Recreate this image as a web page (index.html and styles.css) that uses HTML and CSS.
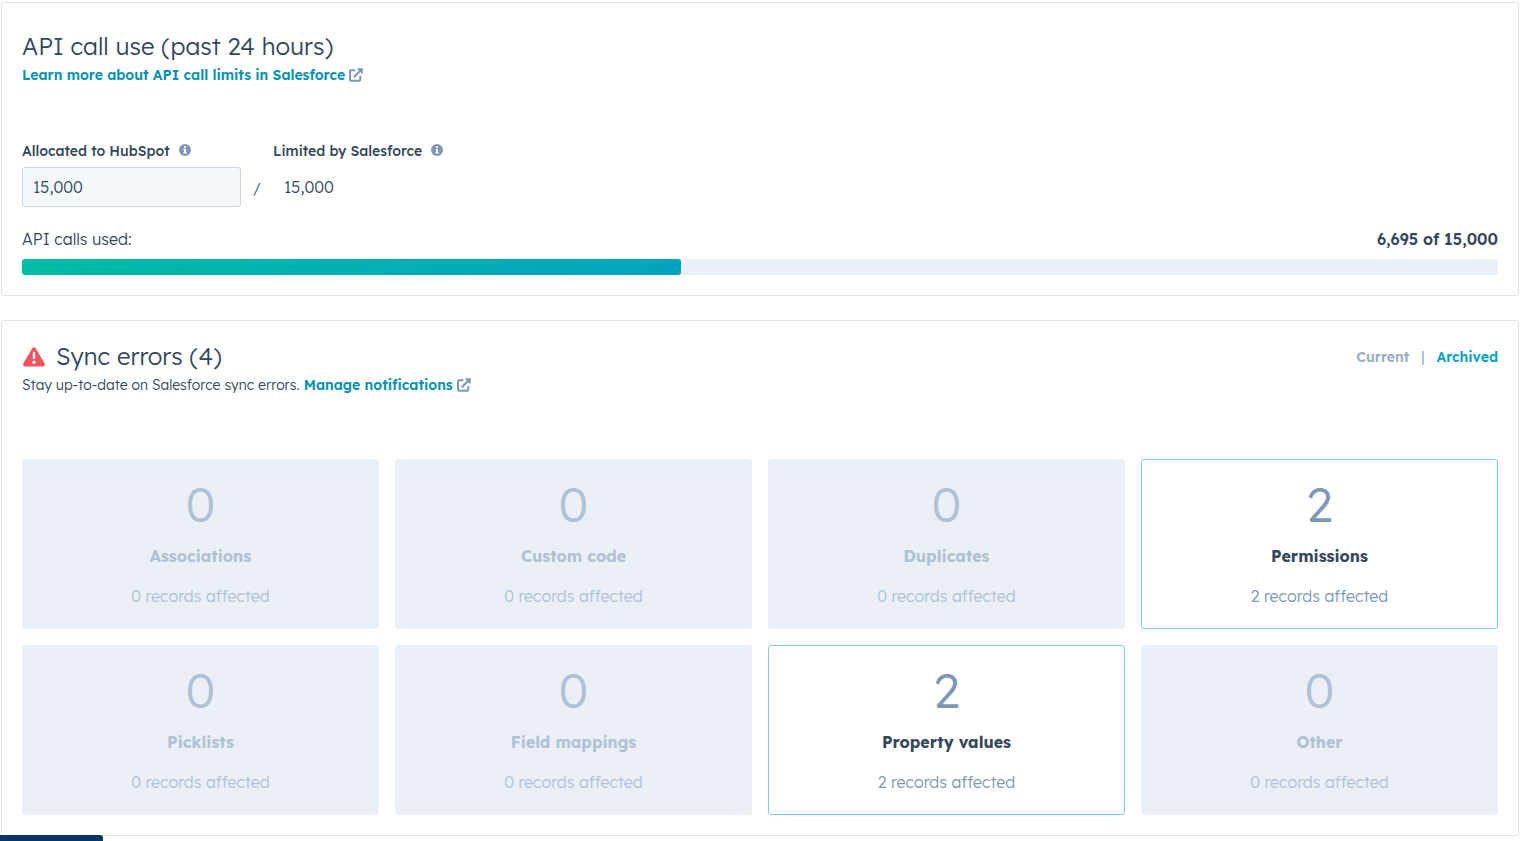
FILE: index.html
```html
<!DOCTYPE html>
<html lang="en">
<head>
<meta charset="utf-8">
<title>Salesforce sync</title>
<link rel="stylesheet" href="styles.css">
</head>
<body>
<svg class="sprite" aria-hidden="true">
  <symbol id="external" viewBox="0 0 14 14">
    <path d="M6.200 2.300H2.200Q1 2.300 1 3.500V11.500Q1 12.700 2.200 12.700H10.100Q11.300 12.700 11.300 11.500V8" fill="none" stroke="currentColor" stroke-width="2"/>
    <path d="M4.800 9.200L11.500 2.500" fill="none" stroke="currentColor" stroke-width="2"/>
    <path d="M8 .3H13.200Q13.800 .3 13.800 .9V6L11.700 4.500 9.600 2.400Z" fill="currentColor"/>
  </symbol>
  <symbol id="info" viewBox="0 0 12 14">
    <circle cx="6" cy="6" r="6" fill="currentColor"/>
    <path d="M5 2.200H7V3.900H5ZM4.300 4.900H7V8.300H7.800V9.500H4.300V8.300H5.100V6.100H4.300Z" fill="#fff"/>
  </symbol>
</svg>
<main class="page">
  <section class="card">
    <header class="card-header">
      <div>
        <h2 class="title">API call use (past 24 hours)</h2>
        <p class="subtitle"><a class="link" href="#">Learn more about API call limits in Salesforce <svg class="external"><use href="#external"/></svg></a></p>
      </div>
    </header>
    <div class="limits">
      <div class="field">
        <div class="field-label"><label for="allocated">Allocated to HubSpot</label><svg class="info"><use href="#info"/></svg></div>
        <input class="input" id="allocated" type="text" value="15,000">
      </div>
      <span class="slash">/</span>
      <div class="limited">
        <div class="field-label"><span>Limited by Salesforce</span><svg class="info"><use href="#info"/></svg></div>
        <div class="limited-value">15,000</div>
      </div>
    </div>
    <div class="usage"><span>API calls used:</span><strong class="usage-total">6,695 of 15,000</strong></div>
    <div class="bar" role="progressbar" aria-label="API calls used" aria-valuemin="0" aria-valuemax="15000" aria-valuenow="6695"><div class="bar-fill" style="width:44.63%"></div></div>
  </section>

  <section class="card">
    <header class="card-header">
      <div>
        <h2 class="title"><svg class="warning" viewBox="-1 -2 24 22"><path d="M9.300 1.200Q11 -.7 12.700 1.200L21.500 16.200Q22.700 19.300 19.700 19.500H2.300Q-.7 19.300 .5 16.200Z" fill="#f2545b"/><path d="M11 6V11" stroke="#fff" stroke-width="2.400" stroke-linecap="round"/><circle cx="11" cy="15.200" r="1.600" fill="#fff"/></svg>Sync errors (4)</h2>
        <p class="subtitle">Stay up-to-date on Salesforce sync errors. <a class="link" href="#">Manage notifications <svg class="external"><use href="#external"/></svg></a></p>
      </div>
      <nav class="views"><button class="view" type="button" disabled>Current</button><span class="divider">|</span><button class="view view-link" type="button">Archived</button></nav>
    </header>
    <div class="tiles">
      <button class="tile" type="button" disabled><span class="count">0</span><span class="name">Associations</span><span class="records">0 records affected</span></button>
      <button class="tile" type="button" disabled><span class="count">0</span><span class="name">Custom code</span><span class="records">0 records affected</span></button>
      <button class="tile" type="button" disabled><span class="count">0</span><span class="name">Duplicates</span><span class="records">0 records affected</span></button>
      <button class="tile tile-active" type="button"><span class="count">2</span><span class="name">Permissions</span><span class="records">2 records affected</span></button>
      <button class="tile" type="button" disabled><span class="count">0</span><span class="name">Picklists</span><span class="records">0 records affected</span></button>
      <button class="tile" type="button" disabled><span class="count">0</span><span class="name">Field mappings</span><span class="records">0 records affected</span></button>
      <button class="tile tile-active" type="button"><span class="count">2</span><span class="name">Property values</span><span class="records">2 records affected</span></button>
      <button class="tile" type="button" disabled><span class="count">0</span><span class="name">Other</span><span class="records">0 records affected</span></button>
    </div>
  </section>
</main>
<div class="status"></div>
</body>
</html>
```
FILE: styles.css
```css
* { box-sizing: border-box; }

body {
  margin: 0;
  background: #fff;
  color: #33475b;
  font: 300 16px/24px "Lexend Deca", Lexend, Inter, sans-serif;
}

button, input { font: inherit; color: inherit; }
h2, p { margin: 0; }
.sprite { display: none; }

.page {
  display: flex;
  flex-direction: column;
  gap: 24px;
  padding: 2px 12px 0 1px;
}

.card {
  padding: 20px;
  border: 1px solid #dfe3eb;
  border-radius: 3px;
}

.card-header {
  display: flex;
  justify-content: space-between;
  align-items: flex-start;
  margin-bottom: 52px;
}
.card + .card .card-header { margin-bottom: 62px; }
.card:first-child .card-header { padding-top: 8px; }

.title {
  display: flex;
  align-items: center;
  gap: 10px;
  margin-bottom: 2px;
  font-size: 24px;
  font-weight: 300;
  line-height: 30px;
}
.warning { width: 24px; height: 22px; }

.subtitle { font-size: 14px; }
.link { color: #0091ae; font-weight: 600; text-decoration: none; }
.external { width: 14px; height: 14px; color: #7c98b6; vertical-align: -2px; }

.views { display: flex; align-items: center; gap: 12px; padding-top: 4px; font-size: 14px; }
.view { padding: 0; border: 0; background: none; color: #99acc2; font-weight: 600; }
.view-link { color: #00a4bd; cursor: pointer; }
.divider { color: #99acc2; font-weight: 400; }

.limits { display: flex; align-items: flex-end; }
.field { width: 219px; }
.field-label {
  display: flex;
  align-items: center;
  gap: 9px;
  margin-bottom: 4px;
  font-size: 14px;
  font-weight: 500;
}
.info { width: 12px; height: 14px; color: #7c98b6; }
.input {
  display: block;
  width: 100%;
  height: 40px;
  padding: 0 10px;
  border: 1px solid #cbd6e2;
  border-radius: 3px;
  background: #f5f8fa;
}
.slash { width: 32px; text-align: center; font-size: 14px; line-height: 36px; }
.limited-value { padding: 0 11px; line-height: 40px; }

.usage { display: flex; justify-content: space-between; margin: 20px 0 8px; }
.usage-total { font-weight: 600; }
.bar { height: 16px; border-radius: 3px; background: #eaf0f6; }
.bar-fill {
  height: 100%;
  border-radius: 3px;
  background: linear-gradient(135deg, #00bda5, #00a4bd);
}

.tiles { display: grid; grid-template-columns: repeat(4, 1fr); gap: 16px; }
.tile {
  display: flex;
  flex-direction: column;
  align-items: center;
  gap: 16px;
  padding: 20px;
  border: 1px solid #eaf0f6;
  border-radius: 3px;
  background: #eaf0f6;
  color: #b0c1d4;
}
.tile-active { border-color: #7fd1de; background: #fff; color: #7c98b6; cursor: pointer; }
.count { font-size: 48px; line-height: 48px; }
.name { font-weight: 700; }
.tile-active .name { color: #33475b; }

/* Status bubble pinned over the lower left corner */
.status {
  position: fixed;
  left: 0;
  bottom: 0;
  width: 103px;
  height: 6px;
  border-radius: 0 3px 0 0;
  background: #0b3564;
}
```
